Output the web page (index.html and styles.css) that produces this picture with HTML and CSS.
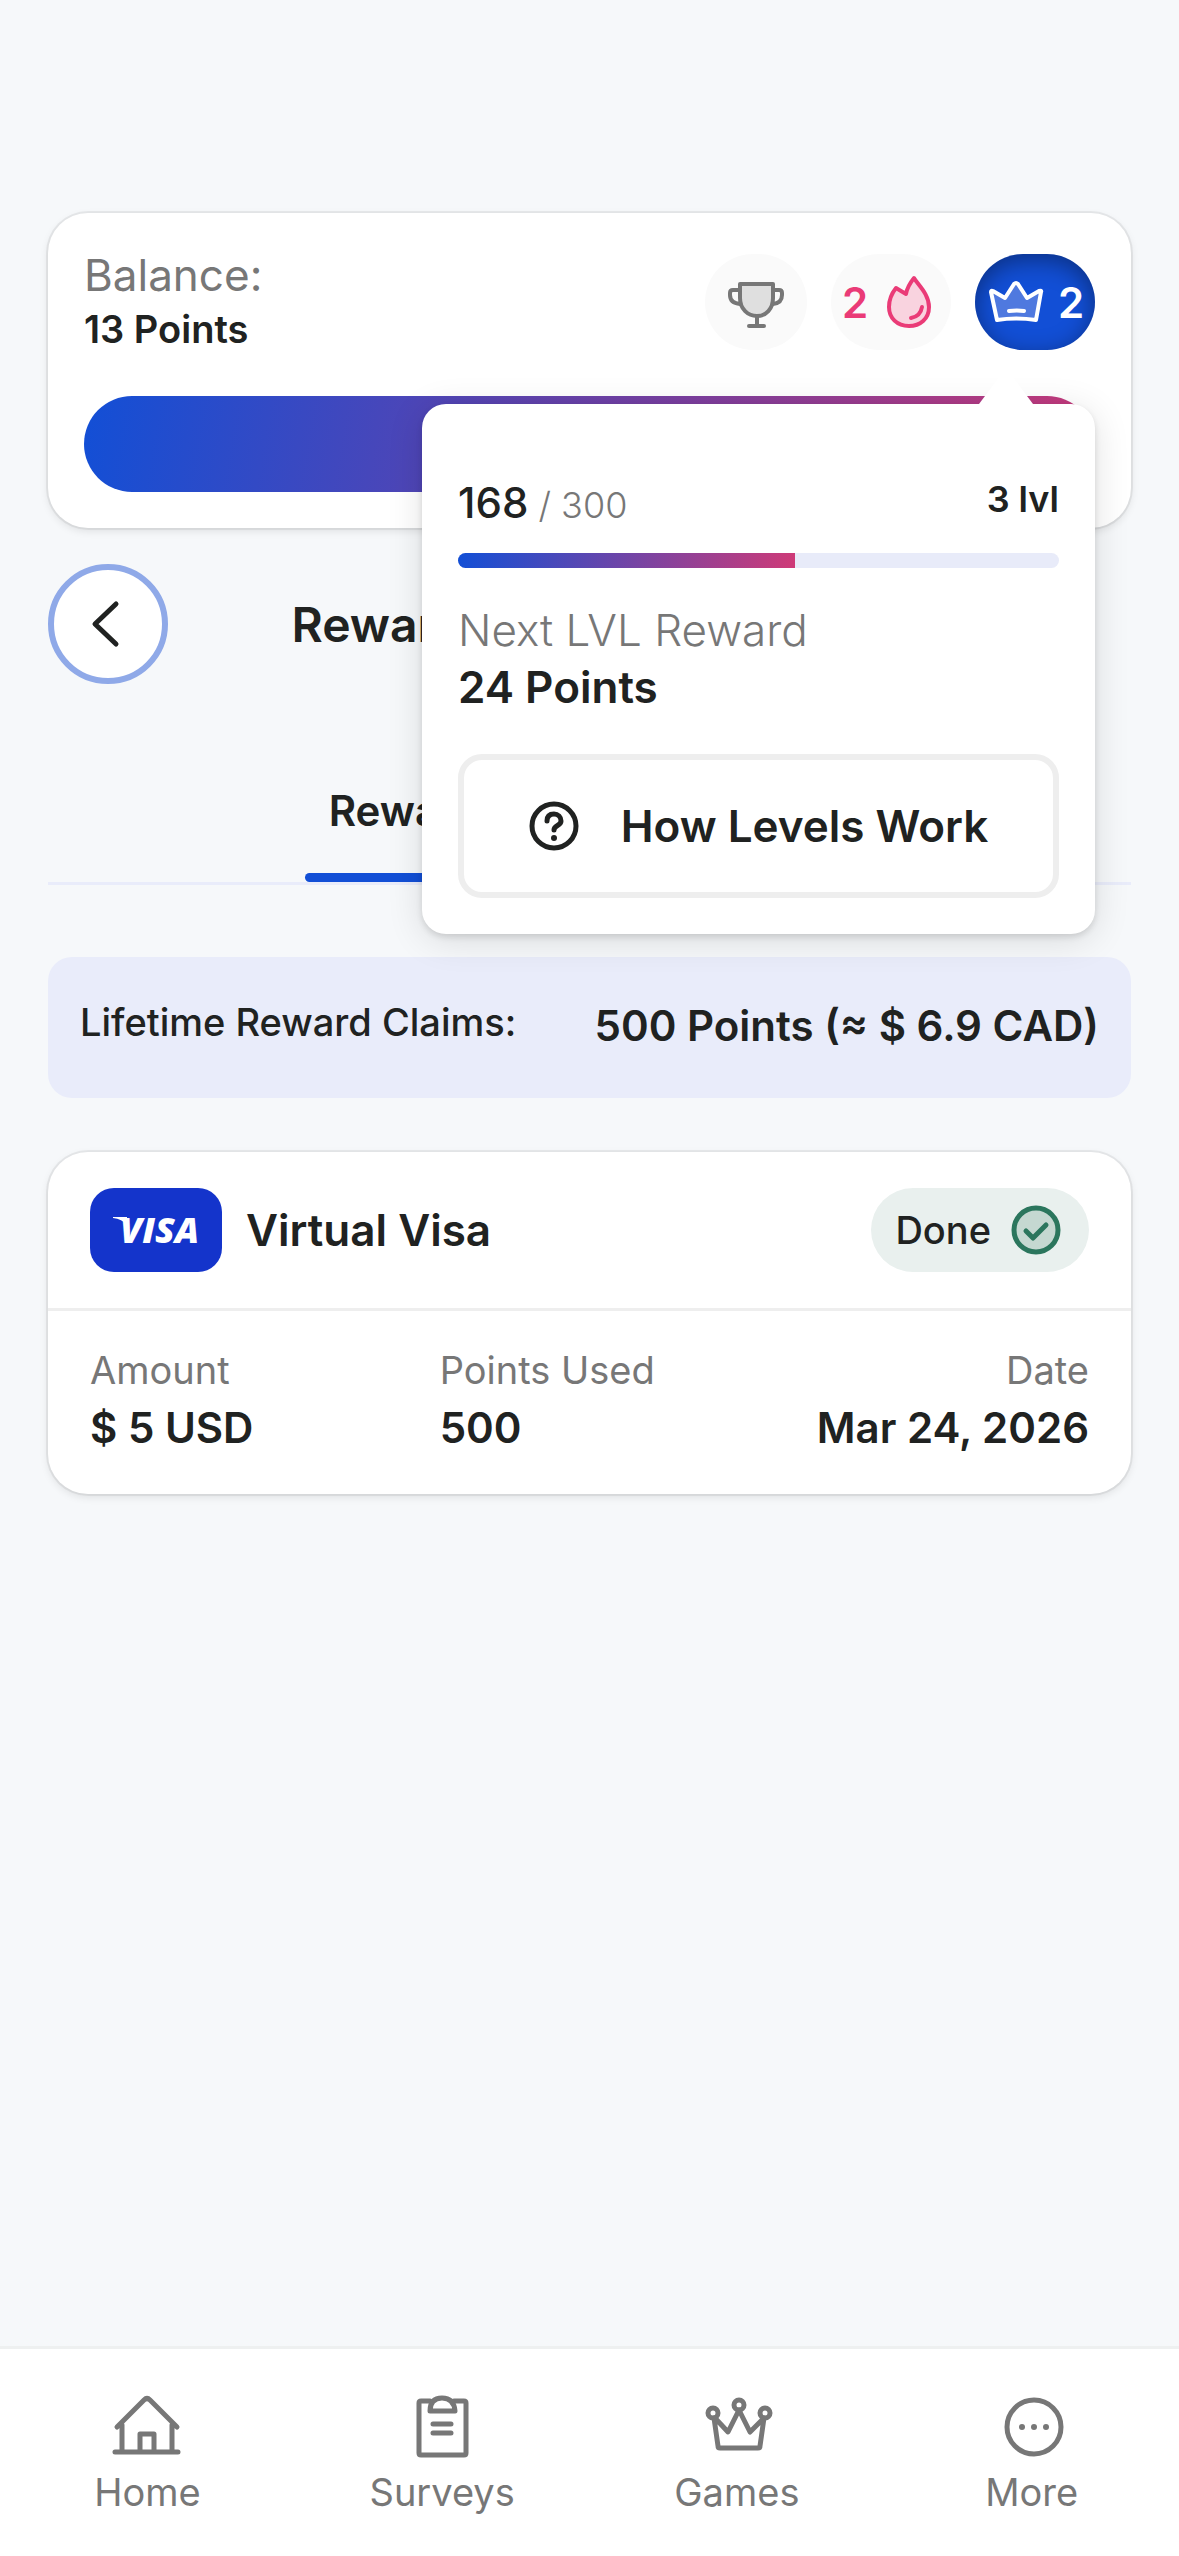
FILE: index.html
```html
<!DOCTYPE html>
<html lang="en">
  <head>
    <meta charset="UTF-8" />
    <meta name="viewport" content="width=device-width, initial-scale=1.0" />
    <title>Reward Payments</title>
    <link rel="stylesheet" href="styles.css">
  </head>
  <body>
    <main>
      <section class="card balance">
        <div class="balance-head">
          <div class="balance-text">
            <p class="balance-label">Balance:</p>
            <p class="balance-value">13 Points</p>
          </div>
          <div class="badges">
            <button class="badge trophy" aria-label="Leaderboard">
              <svg viewBox="0 0 60 60" width="60" height="60" fill="none" stroke="#777" stroke-width="4" stroke-linecap="round" stroke-linejoin="round">
                <path fill="#dfdfdf" d="M14 12h33v14c0 11-7 18-16 18s-17-7-17-18z" />
                <path d="M14 18H7q-3 0-3 3v2q0 8 10 9M47 18h6q3 0 3 3v2q0 8-9 9M31 44v10M23 54h15" />
              </svg>
            </button>
            <button class="badge streak">
              2
              <svg viewBox="0 0 60 60" width="60" height="60" fill="none" stroke="#ea3b77" stroke-width="4" stroke-linecap="round" stroke-linejoin="round">
                <path fill="#f9d3df" d="M34 6C38 13 49 22 49 35C49 47 40 54 29 54C17 54 9 46 9 35C9 27 12 21 16 16L26 22C27 16 30 11 34 6Z" />
                <path d="M42 35c-1 6-5 10-11 11" />
              </svg>
            </button>
            <div class="level">
              <button class="badge crown" aria-expanded="true">
                <svg viewBox="0 0 60 60" width="60" height="60" fill="none" stroke="#fff" stroke-width="4" stroke-linecap="round" stroke-linejoin="round">
                  <path fill="#4f79df" d="M5 20Q5 18 7 19L19 26L28 12Q30 10 32 12L41 26L53 19Q56 18 55 20L50 48Q30 45 11 48Z" />
                  <path d="M23 39q8-1 15 0" />
                </svg>
                2
              </button>
              <div class="popover">
                <div class="level-row">
                  <p class="level-points">168<span> / 300</span></p>
                  <p class="level-next">3 lvl</p>
                </div>
                <div class="progress"><div class="progress-fill" style="width: 56%"></div></div>
                <p class="next-label">Next LVL Reward</p>
                <p class="next-value">24 Points</p>
                <button class="how">
                  <svg viewBox="0 0 50 50" width="50" height="50" fill="none" stroke="#202221" stroke-width="5" stroke-linecap="round">
                    <circle cx="25" cy="25" r="22" />
                    <path d="M18 20c0-5 3-7 7-7s7 3 7 7c0 5-7 4-7 9" />
                    <circle cx="25" cy="37" r="3" fill="#202221" stroke="none" />
                  </svg>
                  How Levels Work
                </button>
              </div>
            </div>
          </div>
        </div>
        <div class="balance-bar"></div>
      </section>

      <header class="title-row">
        <button class="back" aria-label="Back">
          <svg viewBox="0 0 48 48" width="48" height="48" fill="none" stroke="#202221" stroke-width="5" stroke-linecap="round" stroke-linejoin="round">
            <path d="M32 4L11 24l21 20" />
          </svg>
        </button>
        <h1>Reward Payments History</h1>
      </header>

      <nav class="tabs">
        <a class="tab" href="#claims">Reward Payments History</a>
      </nav>

      <section class="lifetime">
        <p class="lifetime-label">Lifetime Reward Claims:</p>
        <p class="lifetime-value">500 Points (≈ $ 6.9 CAD)</p>
      </section>

      <section class="card claim" id="claims">
        <div class="claim-head">
          <svg class="visa" viewBox="0 0 132 84" width="132" height="84">
            <path fill="#fff" d="M23 29h14v8q-5-6-14-7z" />
            <text x="30" y="55">VISA</text>
          </svg>
          <h2>Virtual Visa</h2>
          <span class="status">
            Done
            <svg viewBox="0 0 50 50" width="50" height="50" fill="none" stroke="#2b765d" stroke-width="5" stroke-linecap="round" stroke-linejoin="round">
              <circle fill="#c5d8d1" cx="25" cy="25" r="22" />
              <path d="M15 26l7 7 13-13" />
            </svg>
          </span>
        </div>
        <dl class="claim-details">
          <div>
            <dt>Amount</dt>
            <dd>$ 5 USD</dd>
          </div>
          <div>
            <dt>Points Used</dt>
            <dd>500</dd>
          </div>
          <div class="claim-date">
            <dt>Date</dt>
            <dd>Mar 24, 2026</dd>
          </div>
        </dl>
      </section>
    </main>

    <nav class="bottom-nav">
      <a href="#home">
        <svg viewBox="0 0 72 72" width="72" height="72">
          <path d="M4 61h63M11 61V34M61 61V34M6 36L33 9q3-3 6 0l27 27M29 61V43h14v18" />
        </svg>
        Home
      </a>
      <a href="#surveys">
        <svg viewBox="0 0 72 72" width="72" height="72">
          <path d="M24 10H15q-2 0-2 2v50q0 2 2 2h43q2 0 2-2V12q0-2-2-2H48" />
          <path d="M24 20q0-13 12-13t13 13zM27 33h18M27 42h18" />
        </svg>
        Surveys
      </a>
      <a href="#games">
        <svg viewBox="-2 0 72 72" width="72" height="72">
          <circle cx="10" cy="22" r="5" />
          <circle cx="36" cy="14" r="5" />
          <circle cx="62" cy="22" r="5" />
          <path d="M11 27l4 28q0 2 2 2h38q2 0 2-2l4-28L47 41 36 19 25 41 12 27" />
        </svg>
        Games
      </a>
      <a href="#more">
        <svg viewBox="-2 0 72 72" width="72" height="72">
          <circle cx="36" cy="36" r="27" />
          <g class="dots">
            <circle cx="24" cy="36" r="3" />
            <circle cx="36" cy="36" r="3" />
            <circle cx="48" cy="36" r="3" />
          </g>
        </svg>
        More
      </a>
    </nav>
  </body>
</html>
```
FILE: styles.css
```css
* {
  box-sizing: border-box;
}

body {
  font-family: Inter, "Open Sans", sans-serif;
  font-size: 38px;
  background: #f6f8fa;
  color: #202221;
  margin: 0;
  min-height: 100vh;
  display: flex;
  flex-direction: column;
}

main {
  flex: 1;
  padding: 213px 48px 48px;
}

h1,
h2,
p,
dl,
dd {
  margin: 0;
}

button {
  font: inherit;
  color: inherit;
  border: none;
  padding: 0;
  cursor: pointer;
}

a {
  color: inherit;
  text-decoration: none;
}

svg {
  flex: none;
}

.card {
  background: #fff;
  border-radius: 40px;
  box-shadow: 0 0 0 2px rgba(0, 0, 0, 0.06), 0 3px 8px rgba(0, 0, 0, 0.1);
}

/* balance */
.balance {
  padding: 35px 36px 36px;
}

.balance-head {
  display: flex;
  align-items: center;
  justify-content: space-between;
}

.balance-label {
  font-size: 44px;
  line-height: 54px;
  color: #777;
}

.balance-value {
  font-weight: 600;
  line-height: 54px;
}

.balance-bar {
  height: 96px;
  margin-top: 40px;
  border-radius: 48px;
  background: linear-gradient(100deg, #124fd6, #7a3fa0 58%, #c93a7a);
}

.badges {
  display: flex;
  gap: 24px;
}

.badge {
  display: flex;
  align-items: center;
  justify-content: center;
  gap: 12px;
  width: 120px;
  height: 96px;
  border-radius: 48px;
  background: #fafafa;
  font-size: 42px;
  font-weight: 600;
}

.trophy {
  width: 102px;
}

.streak {
  color: #ea3b77;
}

.crown {
  color: #fff;
  background: #124fd6;
  box-shadow: inset 0 6px 24px rgba(0, 0, 0, 0.4);
}

/* level popover */
.level {
  position: relative;
}

.popover {
  position: absolute;
  z-index: 2;
  top: calc(100% + 54px);
  right: 0;
  width: 673px;
  padding: 72px 36px 36px;
  background: #fff;
  border-radius: 24px;
  box-shadow: 0 3px 6px rgba(0, 0, 0, 0.12), 0 6px 36px rgba(0, 0, 0, 0.12);
}

.popover::before {
  content: "";
  position: absolute;
  right: 62px;
  bottom: 100%;
  border: 27px solid transparent;
  border-top: none;
  border-bottom: 36px solid #fff;
}

.level-row {
  display: flex;
  justify-content: space-between;
}

.level-points {
  font-size: 42px;
  font-weight: 500;
  line-height: 54px;
}

.level-points span {
  font-size: 36px;
  font-weight: 300;
  color: #777;
}

.level-next {
  font-size: 36px;
  font-weight: 600;
  line-height: 46px;
}

.progress {
  height: 15px;
  margin-top: 21px;
  border-radius: 8px;
  background: #e8ebf9;
  overflow: hidden;
}

.progress-fill {
  height: 100%;
  background: linear-gradient(100deg, #124fd6, #cf3a77);
}

.next-label {
  margin-top: 34px;
  font-size: 44px;
  font-weight: 300;
  line-height: 57px;
  color: #777;
}

.next-value {
  font-size: 44px;
  font-weight: 600;
  line-height: 57px;
}

.how {
  display: flex;
  align-items: center;
  justify-content: center;
  gap: 42px;
  width: 100%;
  height: 144px;
  margin-top: 38px;
  border: 6px solid #eee;
  border-radius: 24px;
  background: #fff;
  font-size: 44px;
  font-weight: 600;
}

/* title and tabs */
.title-row {
  display: grid;
  grid-template-columns: 120px 1fr 120px;
  align-items: center;
  margin-top: 36px;
}

.back {
  display: flex;
  align-items: center;
  justify-content: center;
  height: 120px;
  border: 6px solid #8fa9e8;
  border-radius: 50%;
  background: #fff;
}

h1 {
  font-size: 48px;
  font-weight: 600;
  text-align: center;
}

.tabs {
  display: flex;
  justify-content: center;
  margin-top: 84px;
  border-bottom: 3px solid #e9ecfa;
}

.tab {
  padding: 18px 24px 0;
  font-size: 42px;
  font-weight: 600;
  line-height: 50px;
}

.tab::after {
  content: "";
  display: block;
  height: 9px;
  margin: 37px -24px 0;
  border-radius: 5px;
  background: #124fd6;
}

.lifetime {
  display: flex;
  justify-content: space-between;
  margin-top: 72px;
  padding: 36px 32px 39px;
  border-radius: 24px;
  background: #e9ecfa;
}

.lifetime-label {
  font-weight: 500;
  line-height: 58px;
}

.lifetime-value {
  font-size: 42px;
  font-weight: 600;
  line-height: 66px;
}

/* claim card */
.claim {
  margin-top: 54px;
}

.claim-head {
  display: flex;
  align-items: center;
  gap: 24px;
  padding: 36px 42px;
  border-bottom: 3px solid #eee;
}

.visa {
  border-radius: 24px;
  background: #1434cb;
}

.visa text {
  fill: #fff;
  font: italic 800 36px "Open Sans", sans-serif;
}

h2 {
  font-size: 44px;
  font-weight: 600;
}

.status {
  display: flex;
  align-items: center;
  gap: 20px;
  height: 84px;
  margin-left: auto;
  padding: 0 28px 0 24px;
  border-radius: 42px;
  background: #e9f0ee;
  font-weight: 500;
}

.claim-details {
  display: grid;
  grid-template-columns: 35% 1fr auto;
  padding: 32px 42px 35px;
}

dt {
  line-height: 54px;
  color: #777;
}

dd {
  font-size: 42px;
  font-weight: 600;
  line-height: 62px;
}

.claim-date {
  text-align: right;
}

/* bottom navigation */
.bottom-nav {
  display: grid;
  grid-template-columns: repeat(4, 1fr);
  padding: 42px 0 40px;
  border-top: 3px solid #eef0f0;
  background: #fff;
  color: #777;
}

.bottom-nav a {
  display: flex;
  flex-direction: column;
  align-items: center;
  gap: 5px;
  line-height: 48px;
}

.bottom-nav svg {
  fill: none;
  stroke: #777;
  stroke-width: 5;
  stroke-linecap: round;
  stroke-linejoin: round;
}

.bottom-nav .dots {
  fill: #777;
  stroke: none;
}
```
